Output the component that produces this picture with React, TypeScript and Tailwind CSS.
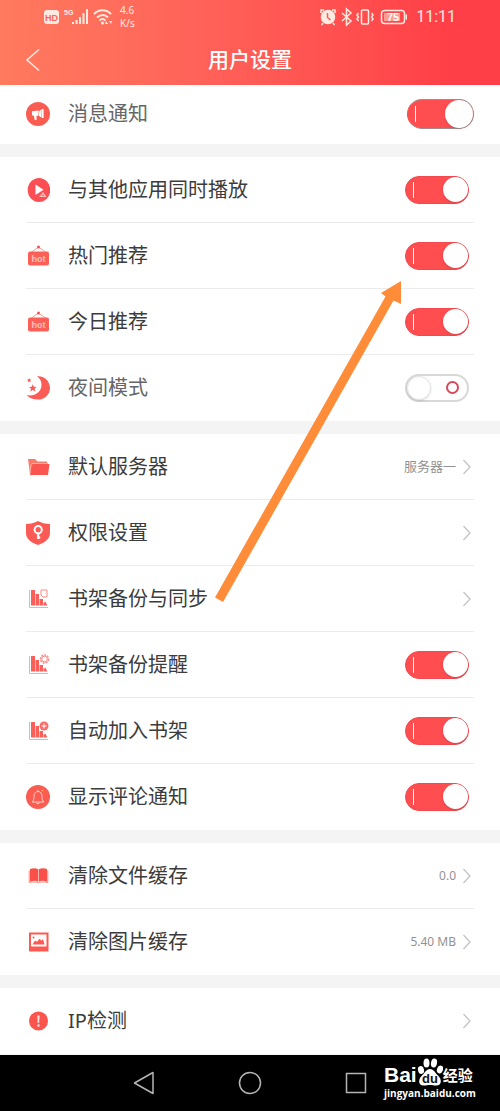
import { ReactNode } from 'react'

interface SettingRowProps {
  id: string
  label: string
  icon: ReactNode
  faded?: boolean
}

interface ToggleRowProps extends SettingRowProps {
  on?: boolean
  pressed?: boolean
}

interface LinkRowProps extends SettingRowProps {
  value?: ReactNode
}

function MegaphoneIcon() {
  return (
    <svg viewBox="0 0 24 24" className="size-6" aria-hidden="true">
      <circle cx="12" cy="12" r="12" fill="#fb5c52" />
      <path d="M6 9.200 12.400 8.500v5.200l-1.900.2v4.100H8.800l-1-4.300L6 13.200z" fill="#fff" />
      <path d="M12.800 9.400 15.400 7.500v8L12.800 13.800zM15.800 7h1.800v9h-1.800z" fill="#fff" />
    </svg>
  )
}

function PlayIcon() {
  return (
    <svg viewBox="0 0 24 24" className="size-6" aria-hidden="true">
      <ellipse cx="13" cy="12" rx="11.300" ry="12" fill="#fb4f55" />
      <path d="M9.500 6.500v10.500l8-5.200z" fill="#fff" />
      <path d="m13 19 4-5 3.500 5z" fill="#ffc0be" />
      <path d="m14 16.800 4 .6" stroke="#fb6a6a" />
    </svg>
  )
}

function HotIcon() {
  return (
    <svg viewBox="0 0 24 24" className="size-6" aria-hidden="true">
      <path d="m5.500 8 7-5 7 5" fill="none" stroke="#f99a90" />
      <circle cx="12.500" cy="3" r="1.500" fill="#f2505c" />
      <rect x="2" y="7.500" width="21" height="14" rx="2" fill="#fb6058" />
      <text x="12.500" y="18" textAnchor="middle" fontSize="9" fontWeight="bold" fill="#ffc3b8" fontFamily="Liberation Sans, sans-serif">
        hot
      </text>
    </svg>
  )
}

function MoonIcon() {
  return (
    <svg viewBox="0 0 24 24" className="size-6" aria-hidden="true" fill="#fb5c55">
      <path d="M11 .3c7-.8 13.200 4.700 13 12.200-.3 6.500-6 11.300-12 11.100-4.500-.1-9-1.600-11.300-4.600 7.300 2 14.800-3 14.800-10C15.500 5 14 2.500 11 .3z" />
      <path d="m6.800 8.200 1.100 2.500 2.700.3-2 1.800.6 2.700-2.400-1.400-2.400 1.400.6-2.700-2-1.800 2.700-.3z" />
      <path d="m3.200 2 .7 1.400 1.500.2-1.100 1.100.3 1.500-1.400-.7-1.400.7.3-1.500L1 3.600l1.500-.2z" />
    </svg>
  )
}

function FolderIcon() {
  return (
    <svg viewBox="0 0 24 24" className="size-6" aria-hidden="true">
      <path d="M2 4h7l2.500 2.500H21V19H4z" fill="#fb7a6a" />
      <path d="M6.500 9H23.500L22 20H4z" fill="#fb5552" />
      <path d="M4.200 18.500C4 13 4.300 8.700 7 8.500h15" fill="none" stroke="#ffb0a3" />
    </svg>
  )
}

function ShieldKeyIcon() {
  return (
    <svg viewBox="0 0 24 24" className="size-6" aria-hidden="true">
      <path d="M12 0c3.500 2 7.500 3 12 3v9c0 6-5 9.500-12 12C5 21.500 0 18 0 12V3c4.500 0 8.500-1 12-3z" fill="#fb5a55" />
      <circle cx="12.200" cy="8.700" r="3.600" fill="none" stroke="#fff" strokeWidth="2" />
      <path d="M12.200 12.500V18M12.200 16.500h2" stroke="#fff" strokeWidth="2.200" />
    </svg>
  )
}

// Bookshelf with a small badge in the top right corner
function ShelfIcon({ children }: { children: ReactNode }) {
  return (
    <svg viewBox="0 0 24 24" className="size-6" aria-hidden="true">
      <path d="M3.500 3v17.500h18.500" fill="none" stroke="#fbaaa3" />
      <path d="M5 3h4v15.500H5zM9.500 7h3.500v11.500H9.500zM13.500 12h3.500v6.500h-3.500zM17.500 15.500l2.200-.5 1.600 3.500h-3.800z" fill="#fb5f5a" />
      {children}
    </svg>
  )
}

function BellIcon() {
  return (
    <svg viewBox="0 0 24 24" className="size-6" aria-hidden="true" fill="none" stroke="#ffd0c4">
      <circle cx="12" cy="12" r="12" fill="#fb5c52" stroke="none" />
      <path d="M6 17h12c-1.600-1.300-2-2.500-2-5.500 0-3.200-1.600-5-4-5s-4 1.800-4 5c0 3-.4 4.200-2 5.500zM10.300 17.500c.3 1.700 3.100 1.700 3.400 0M12 5v1.500" />
      <circle cx="16.500" cy="5.500" r="1" fill="#ff9a48" stroke="none" />
    </svg>
  )
}

function BookIcon() {
  return (
    <svg viewBox="0 0 24 24" className="size-6" aria-hidden="true">
      <path d="M4 5c3-1.200 6-1.200 8.200.3v12.400c-2.200-1.200-5.200-1.200-8.200 0zM21 5c-3-1.200-6-1.200-8.200.3v12.400c2.200-1.200 5.200-1.200 8.200 0z" fill="#fb5048" />
      <path d="M3.200 6.500v12c3-.8 6-.8 9.300 0 3.200-.8 6.200-.8 9.300 0v-12" fill="none" stroke="#fb8a80" />
    </svg>
  )
}

function PictureIcon() {
  return (
    <svg viewBox="0 0 24 24" className="size-6" aria-hidden="true">
      <path d="M3 2.500h19.500v19H3zM5 4.500v12h15.500v-12z" fill="#fb5a52" fillRule="evenodd" />
      <path d="M6.500 14.500 9 10.500l2 1.300 2.500-3 2 2L17 9l1.500 5.500z" fill="#fb5a52" />
      <circle cx="7.500" cy="7.500" r="1" fill="#fb5a52" />
    </svg>
  )
}

function AlertIcon() {
  return (
    <svg viewBox="0 0 24 24" className="size-6" aria-hidden="true">
      <circle cx="12.500" cy="12" r="9.500" fill="#fb544f" />
      <path d="M11.200 6.500h2.500l-.6 7.500h-1.300z" fill="#ffe1da" />
      <circle cx="12.500" cy="16.500" r="1.200" fill="#ffe1da" />
    </svg>
  )
}

function Chevron() {
  return (
    <svg viewBox="0 0 8 16" className="h-4 w-2" fill="none" stroke="#c4c4c4" strokeWidth="1.300" aria-hidden="true">
      <path d="m.5 1 6.500 7-6.500 7" />
    </svg>
  )
}

const rowClass =
  'mx-[26px] flex h-[66px] items-center gap-[18px] border-b border-[#ebebeb] text-left text-xl text-[#3c3c3c] last:border-transparent'

function ToggleRow({ id, label, icon, on = false, pressed = false, faded = false }: ToggleRowProps) {
  const size = pressed
    ? 'h-[30px] w-[67px] border border-[#a08c8c] border-l-[#ff4d50] after:size-7'
    : 'mr-[5px] h-7 w-16 border border-[#f2484f] after:size-[25px]'

  return (
    <div className={rowClass}>
      {icon}
      <label htmlFor={id} className={faded ? 'flex-1 text-[#666]' : 'flex-1'}>
        {label}
      </label>
      {on ? (
        <input
          id={id}
          type="checkbox"
          defaultChecked
          className={`flex appearance-none items-center justify-between rounded-full bg-[#ff4d50] pl-[7px] before:h-4 before:w-px before:bg-white after:rounded-full after:bg-white after:shadow-sm ${size}`}
        />
      ) : (
        <input
          id={id}
          type="checkbox"
          className="mr-[5px] flex h-7 w-16 appearance-none items-center justify-between rounded-full border-2 border-[#d8d8d8] bg-white pr-2 before:size-6 before:rounded-full before:border before:border-[#e4e4e4] before:bg-white before:shadow-sm after:size-[13px] after:rounded-full after:border-2 after:border-[#d9485a]"
        />
      )}
    </div>
  )
}

function LinkRow({ id, label, icon, value }: LinkRowProps) {
  return (
    <button id={id} type="button" className={rowClass}>
      {icon}
      <span className="flex-1">{label}</span>
      <span className="mr-[3px] flex items-center gap-[7px] text-[13px] text-[#929292]">
        {value}
        <Chevron />
      </span>
    </button>
  )
}

function StatusBar() {
  return (
    <div className="flex h-[34px] items-center justify-between px-11 text-[#ffeae2]">
      <div className="flex items-center">
        <svg viewBox="0 0 92 24" className="h-6 w-[92px]" aria-hidden="true" fill="currentColor" fontFamily="Liberation Sans, sans-serif" fontWeight="bold">
          <rect y="5" width="15" height="14" rx="3" />
          <text x="1" y="15.500" fontSize="9" fill="#f8655a">HD</text>
          <text x="20" y="10" fontSize="7">5G</text>
          <path d="M28 17h2v2h-2zM31.500 15h2v4h-2zM35 12h2v7h-2zM38.500 8h2v11h-2zM42 4h2v15h-2z" />
          <g fill="none" stroke="currentColor" strokeWidth="2">
            <path d="M50 9c5-5 12-5 17 0M53 12.500c4-3.500 8-3.500 11 0M55.500 15.500c2-2 4-2 6 0" />
          </g>
          <circle cx="58.500" cy="18" r="1.500" />
          <path d="m62 16 2 3h-3zM67 19l-2-3h3z" />
        </svg>
        <div className="-ml-4 text-[10px] leading-[13px]">
          <div>4.6</div>
          <div>K/s</div>
        </div>
      </div>
      <div className="flex items-center gap-[9px]">
        <svg viewBox="0 0 90 20" className="h-5 w-[90px]" aria-hidden="true" fill="none" stroke="currentColor" strokeWidth="1.500">
          <circle cx="11" cy="10" r="6.500" fill="currentColor" />
          <path d="M4 6V3h3M18 6V3h-3M6 16l-1.500 2M16 16l1.500 2" />
          <path d="M10.500 6v4.500l3 2.500" stroke="#fc5c56" />
          <path d="m25 6 9 8-4.500 4V2L34 6l-9 8" />
          <rect x="44.500" y="3" width="7" height="14" rx="1" />
          <path d="m41.500 6-1.500 2 1.500 2-1.500 2 1.500 2M54.500 6l1.500 2-1.500 2 1.500 2-1.500 2" />
          <rect x="64.500" y="3.500" width="23" height="13" rx="3" />
          <path d="M89.500 7.500v5" strokeWidth="2" />
          <rect x="67" y="6" width="16" height="8" fill="#ff9d93" stroke="none" />
          <text x="70" y="14" fontSize="11" fontWeight="bold" stroke="none" fill="#fff" fontFamily="Liberation Sans, sans-serif">75</text>
        </svg>
        <span className="font-['Roboto',sans-serif] text-base leading-5">11:11</span>
      </div>
    </div>
  )
}

function Watermark() {
  return (
    <div className="absolute right-[26px] bottom-3 w-[90px] font-bold text-white">
      <div className="flex items-end leading-6">
        <span className="font-['Liberation_Sans',sans-serif] text-[21px]">Bai</span>
        <svg viewBox="0 0 26 30" className="h-[30px] w-[26px]" aria-hidden="true" fill="#fff">
          <ellipse cx="4" cy="13" rx="3" ry="4" transform="rotate(-15 4 13)" />
          <ellipse cx="9.500" cy="6" rx="3" ry="4.500" />
          <ellipse cx="17" cy="6" rx="3" ry="4.500" transform="rotate(10 17 6)" />
          <ellipse cx="23" cy="12.500" rx="3" ry="4" transform="rotate(20 23 12.500)" />
          <path d="M13 12c4 0 5 4 8 6.500 4 3.500 4 10-1.500 10-3 0-4-.5-6.500-.5s-3.500.5-6.500.5c-5.500 0-5.500-6.500-1.500-10C8 16 9 12 13 12z" />
          <text x="13" y="25.500" textAnchor="middle" fontSize="13" fill="#111" fontFamily="Liberation Sans, sans-serif">du</text>
        </svg>
        <span className="text-[15px]">经验</span>
      </div>
      <div className="font-['Open_Sans',sans-serif] text-[10px] leading-3">jingyan.baidu.com</div>
    </div>
  )
}

export default function App() {
  return (
    <div className="relative flex min-h-screen flex-col bg-[#f4f4f4] font-['Noto_Sans','Noto_Sans_CJK_SC',sans-serif]">
      <header className="h-[85px] bg-linear-to-r from-[#ff7a5e] via-[#ff5f58] via-45% to-[#ff3f47] to-90%">
        <StatusBar />
        <div className="grid h-[51px] grid-cols-3 items-center px-6">
          <button type="button" aria-label="返回" className="w-6">
            <svg viewBox="0 0 18 24" className="h-6 w-[18px]" fill="none" stroke="#ffe3da" strokeWidth="1.600">
              <path d="M15 1.500 3 12l12 10.500" />
            </svg>
          </button>
          <h1 className="text-center text-[21px] font-medium text-white">用户设置</h1>
        </div>
      </header>

      <main className="flex flex-col gap-[13px]">
        {/* scrolled partly under the header */}
        <section className="flex h-[59px] flex-col justify-end bg-white">
          <ToggleRow id="message" label="消息通知" icon={<MegaphoneIcon />} on pressed faded />
        </section>

        <section className="flex flex-col bg-white">
          <ToggleRow id="mix-play" label="与其他应用同时播放" icon={<PlayIcon />} on />
          <ToggleRow id="hot" label="热门推荐" icon={<HotIcon />} on />
          <ToggleRow id="today" label="今日推荐" icon={<HotIcon />} on />
          <ToggleRow id="night" label="夜间模式" icon={<MoonIcon />} faded />
        </section>

        <section className="flex flex-col bg-white">
          <LinkRow id="server" label="默认服务器" icon={<FolderIcon />} value="服务器一" />
          <LinkRow id="permission" label="权限设置" icon={<ShieldKeyIcon />} />
          <LinkRow
            id="sync"
            label="书架备份与同步"
            icon={
              <ShelfIcon>
                <path d="M15 3h6v7h-4l-2-2z" fill="#fff" stroke="#fb8a84" />
              </ShelfIcon>
            }
          />
          <ToggleRow
            id="backup-remind"
            label="书架备份提醒"
            icon={
              <ShelfIcon>
                <circle cx="18.500" cy="6" r="4" fill="none" stroke="#fb8a84" strokeWidth="1.500" strokeDasharray="2 1" />
                <circle cx="18.500" cy="6" r="2.800" fill="#fff" stroke="#fb8a84" />
              </ShelfIcon>
            }
            on
          />
          <ToggleRow
            id="auto-add"
            label="自动加入书架"
            icon={
              <ShelfIcon>
                <circle cx="18" cy="7" r="4.500" fill="#fb6a64" />
                <path d="M18 4.500v5M15.500 7h5" stroke="#fff" />
              </ShelfIcon>
            }
            on
          />
          <ToggleRow id="comment" label="显示评论通知" icon={<BellIcon />} on />
        </section>

        <section className="flex flex-col bg-white">
          <LinkRow id="clear-file" label="清除文件缓存" icon={<BookIcon />} value={<span className="text-xs">0.0</span>} />
          <LinkRow id="clear-image" label="清除图片缓存" icon={<PictureIcon />} value={<span className="text-xs">5.40 MB</span>} />
        </section>

        <section className="flex flex-col bg-white">
          <LinkRow id="ip" label="IP检测" icon={<AlertIcon />} />
        </section>
      </main>

      <nav className="relative mt-px flex min-h-14 flex-1 items-center justify-center gap-[82px] bg-black">
        <button type="button" aria-label="后退">
          <svg viewBox="0 0 24 24" className="size-6" fill="none" stroke="#b5b5b5" strokeWidth="1.500" strokeLinejoin="round">
            <path d="M21 1.500v21L2.500 12z" />
          </svg>
        </button>
        <button type="button" aria-label="主页">
          <svg viewBox="0 0 24 24" className="size-6" fill="none" stroke="#b5b5b5" strokeWidth="1.500">
            <circle cx="12" cy="12" r="10.500" />
          </svg>
        </button>
        <button type="button" aria-label="最近任务">
          <svg viewBox="0 0 24 24" className="size-6" fill="none" stroke="#b5b5b5" strokeWidth="1.500">
            <rect x="2.500" y="2.500" width="19" height="19" />
          </svg>
        </button>
        <Watermark />
      </nav>

      <svg viewBox="0 0 190 325" className="pointer-events-none absolute top-[279px] left-[214px] h-[325px] w-[190px]" aria-hidden="true">
        <path d="M187 2v23l-7.500-3.500L9 323l-8-4.500L171.500 17.500 167 14z" fill="#ff8c38" />
      </svg>
    </div>
  )
}
